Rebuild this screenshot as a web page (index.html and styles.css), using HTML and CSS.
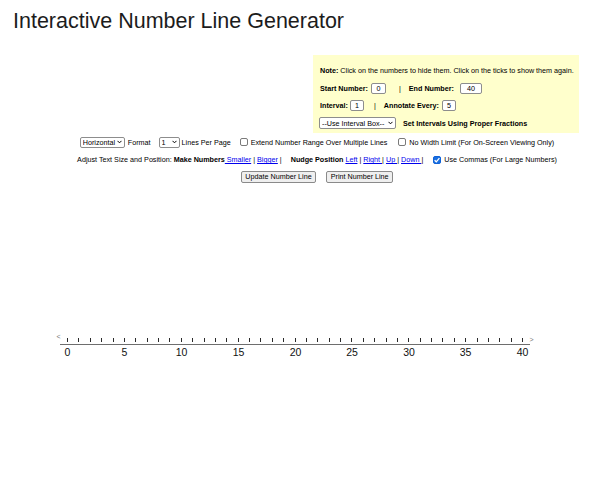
FILE: index.html
```html
<!DOCTYPE html>
<html lang="en">
<head>
<meta charset="utf-8">
<title>Interactive Number Line Generator</title>
<link rel="stylesheet" href="styles.css">
</head>
<body>
<h1 class="title">Interactive Number Line Generator</h1>

<div class="note-box">
  <div class="note"><b>Note:</b> Click on the numbers to hide them. Click on the ticks to show them again.</div>
  <div class="box-row row-a">
    <b>Start Number:</b><input class="num in-start" value="0"><span class="sep sep-a">|</span><b>End Number:</b><input class="num in-end" value="40">
  </div>
  <div class="box-row row-b">
    <b>Interval:</b><input class="num in-int" value="1"><span class="sep sep-b">|</span><b>Annotate Every:</b><input class="num in-ann" value="5">
  </div>
  <div class="box-row row-c">
    <select class="sel sel-int"><option>--Use Interval Box--</option></select><b class="frac">Set Intervals Using Proper Fractions</b>
  </div>
</div>

<div class="opts">
  <select class="sel sel-orient"><option>Horizontal</option></select>
  <span class="lbl-format">Format</span>
  <select class="sel sel-lines"><option>1</option></select>
  <span class="lbl-lines">Lines Per Page</span>
  <label class="chk-lbl chk-extend"><input type="checkbox" class="chk">Extend Number Range Over Multiple Lines</label>
  <label class="chk-lbl chk-width"><input type="checkbox" class="chk">No Width Limit (For On-Screen Viewing Only)</label>
</div>

<div class="adjust">Adjust Text Size and Position: <b>Make Numbers</b><a href="#"> Smaller</a> | <a href="#">Bigger</a> |<span class="gap"></span><b>Nudge Position</b> <a href="#">Left</a> | <a href="#">Right </a>| <a href="#">Up </a>| <a href="#">Down </a>| <input type="checkbox" class="chk chk-commas" checked>Use Commas (For Large Numbers)</div>

<div class="actions">
  <button class="btn">Update Number Line</button>
  <button class="btn">Print Number Line</button>
</div>

<div class="numline">
  <svg width="600" height="40" viewBox="0 0 600 40">
    <text class="arrow" x="56.5" y="13.5">&lt;</text>
    <text class="arrow" x="529.5" y="16.5">&gt;</text>
    <line class="axis" x1="60" y1="19.5" x2="530" y2="19.5"/>
    <path class="ticks" d="M67.5 13v4M78.5 13v4M90.5 13v4M101.5 13v4M113.5 13v4M124.5 13v4M135.5 13v4M147.5 13v4M158.5 13v4M169.5 13v4M181.5 13v4M192.5 13v4M204.5 13v4M215.5 13v4M226.5 13v4M238.5 13v4M249.5 13v4M260.5 13v4M272.5 13v4M283.5 13v4M295.5 13v4M306.5 13v4M317.5 13v4M329.5 13v4M340.5 13v4M351.5 13v4M363.5 13v4M374.5 13v4M386.5 13v4M397.5 13v4M408.5 13v4M420.5 13v4M431.5 13v4M442.5 13v4M454.5 13v4M465.5 13v4M477.5 13v4M488.5 13v4M499.5 13v4M511.5 13v4M522.5 13v4"/>
    <g class="labels">
      <text x="67.5" y="31">0</text>
      <text x="124.5" y="31">5</text>
      <text x="181.5" y="31">10</text>
      <text x="238.5" y="31">15</text>
      <text x="295.5" y="31">20</text>
      <text x="352" y="31">25</text>
      <text x="409" y="31">30</text>
      <text x="465.5" y="31">35</text>
      <text x="522.5" y="31">40</text>
    </g>
  </svg>
</div>
</body>
</html>
```

FILE: styles.css
```css
html, body {
  margin: 0;
  padding: 0;
  background: #ffffff;
}

body {
  font-family: "Liberation Sans", Arial, sans-serif;
  font-size: 7.2px;
  color: #000;
}

.title {
  margin: 9px 0 0 13px;
  font-size: 21.5px;
  line-height: 25px;
  font-weight: normal;
  color: #1c1c1c;
}

/* yellow note box */
.note-box {
  box-sizing: border-box;
  margin: 21px 0 0 313px;
  width: 266px;
  height: 78px;
  padding: 11px 0 0 7px;
  background: #ffffcc;
}

.note {
  line-height: 10px;
  white-space: nowrap;
}

.box-row {
  display: flex;
  align-items: center;
  height: 12px;
  white-space: nowrap;
}

.row-a { margin-top: 6px; }
.row-b { margin-top: 5px; }
.row-c { margin-top: 6px; margin-left: -1px; }

.num {
  box-sizing: border-box;
  height: 11px;
  padding: 0;
  border: 1px solid #8d8d8d;
  border-radius: 2px;
  background: #fff;
  font-family: "Liberation Sans", Arial, sans-serif;
  font-size: 7.2px;
  text-align: center;
  color: #000;
}

.in-start { width: 15px; margin-left: 3px; }
.in-end { width: 22px; margin-left: 6px; }
.in-int { width: 14px; margin-left: 2px; }
.in-ann { width: 14px; margin-left: 3px; }

.sep-a { margin: 0 8px 0 13px; }
.sep-b { margin: 0 8px 0 10px; }

.sel {
  box-sizing: border-box;
  -webkit-appearance: none;
  appearance: none;
  height: 11px;
  padding: 0 0 0 2px;
  border: 1px solid #8d8d8d;
  border-radius: 2px;
  background-color: #fff;
  background-image: url("data:image/svg+xml;utf8,<svg xmlns='http://www.w3.org/2000/svg' width='6' height='4' viewBox='0 0 6 4'><path d='M0.6 0.6 L3 3 L5.4 0.6' fill='none' stroke='black' stroke-width='1.2'/></svg>");
  background-repeat: no-repeat;
  background-position: right 2px center;
  background-size: 5px 4px;
  font-family: "Liberation Sans", Arial, sans-serif;
  font-size: 7.2px;
  line-height: 9px;
  color: #000;
}

.sel-int { width: 77px; height: 12px; }
.frac { margin-left: 7px; }

/* options row */
.opts {
  display: flex;
  align-items: center;
  justify-content: center;
  height: 12px;
  margin-top: 3px;
  padding-left: 34px;
  white-space: nowrap;
}

.sel-orient { width: 45px; }
.lbl-format { margin-left: 3px; }
.sel-lines { width: 21px; margin-left: 8px; }
.lbl-lines { margin-left: 2px; }

.chk-lbl {
  display: inline-flex;
  align-items: center;
}

.chk-extend { margin-left: 9px; }
.chk-width { margin-left: 11px; }

.chk {
  box-sizing: border-box;
  -webkit-appearance: none;
  appearance: none;
  width: 8px;
  height: 8px;
  margin: 0 3px 0 0;
  border: 1px solid #7a7a7a;
  border-radius: 2px;
  background: #fff;
  vertical-align: middle;
}

.chk:checked {
  border-color: #0f62d8;
  background-color: #1a6fe0;
  background-image: url("data:image/svg+xml;utf8,<svg xmlns='http://www.w3.org/2000/svg' width='8' height='8' viewBox='0 0 8 8'><path d='M1.6 4.2 L3.3 5.8 L6.4 2.2' fill='none' stroke='white' stroke-width='1.3'/></svg>");
  background-repeat: no-repeat;
  background-position: center;
  background-size: 8px 8px;
}

/* adjust row */
.adjust {
  height: 10px;
  line-height: 10px;
  margin-top: 7px;
  padding-left: 34px;
  text-align: center;
  white-space: nowrap;
}

.adjust a {
  color: #0000ee;
  text-decoration: underline;
}

.adjust .gap {
  display: inline-block;
  width: 9px;
}

.chk-commas {
  margin: -1px 3px 0 8px;
}

/* buttons */
.actions {
  display: flex;
  justify-content: center;
  gap: 10px;
  margin-top: 6px;
  padding-left: 34px;
}

.btn {
  box-sizing: border-box;
  height: 12px;
  padding: 0 3.5px;
  border: 1px solid #8a8a8a;
  border-radius: 2px;
  background: #efefef;
  font-family: "Liberation Sans", Arial, sans-serif;
  font-size: 7.2px;
  line-height: 10px;
  color: #000;
}

/* number line */
.numline {
  margin-top: 142px;
  height: 40px;
}

.numline svg {
  display: block;
}

.axis {
  stroke: #6e6e6e;
  stroke-width: 1;
  shape-rendering: crispEdges;
}

.ticks {
  stroke: #2a2a2a;
  stroke-width: 1;
  fill: none;
  shape-rendering: crispEdges;
}

.arrow {
  font-family: "Liberation Sans", Arial, sans-serif;
  font-size: 7px;
  fill: #777;
}

.labels text {
  font-family: "Liberation Sans", Arial, sans-serif;
  font-size: 10.5px;
  fill: #111;
  text-anchor: middle;
}
```
